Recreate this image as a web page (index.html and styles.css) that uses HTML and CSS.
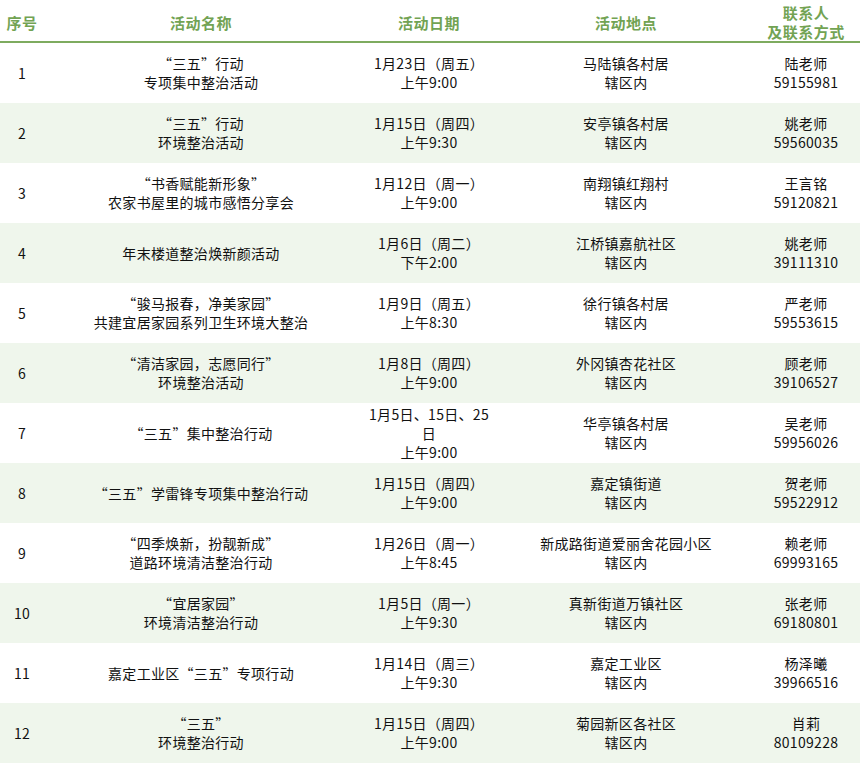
FILE: index.html
```html
<!DOCTYPE html>
<html lang="zh-CN">
<head>
<meta charset="utf-8">
<title>活动列表</title>
<link rel="stylesheet" href="styles.css">
</head>
<body>
<table class="events">
  <colgroup>
    <col class="c-no"><col class="c-name"><col class="c-date"><col class="c-place"><col class="c-contact">
  </colgroup>
  <thead>
    <tr>
      <th>序号</th>
      <th>活动名称</th>
      <th>活动日期</th>
      <th>活动地点</th>
      <th>联系人<br>及联系方式</th>
    </tr>
  </thead>
  <tbody>
    <tr><td>1</td><td>“三五”行动<br>专项集中整治活动</td><td>1月23日（周五）<br>上午9:00</td><td>马陆镇各村居<br>辖区内</td><td>陆老师<br>59155981</td></tr>
    <tr><td>2</td><td>“三五”行动<br>环境整治活动</td><td>1月15日（周四）<br>上午9:30</td><td>安亭镇各村居<br>辖区内</td><td>姚老师<br>59560035</td></tr>
    <tr><td>3</td><td>“书香赋能新形象”<br>农家书屋里的城市感悟分享会</td><td>1月12日（周一）<br>上午9:00</td><td>南翔镇红翔村<br>辖区内</td><td>王言铭<br>59120821</td></tr>
    <tr><td>4</td><td>年末楼道整治焕新颜活动</td><td>1月6日（周二）<br>下午2:00</td><td>江桥镇嘉航社区<br>辖区内</td><td>姚老师<br>39111310</td></tr>
    <tr><td>5</td><td>“骏马报春，净美家园”<br>共建宜居家园系列卫生环境大整治</td><td>1月9日（周五）<br>上午8:30</td><td>徐行镇各村居<br>辖区内</td><td>严老师<br>59553615</td></tr>
    <tr><td>6</td><td>“清洁家园，志愿同行”<br>环境整治活动</td><td>1月8日（周四）<br>上午9:00</td><td>外冈镇杏花社区<br>辖区内</td><td>顾老师<br>39106527</td></tr>
    <tr><td>7</td><td>“三五”集中整治行动</td><td>1月5日、15日、25<br>日<br>上午9:00</td><td>华亭镇各村居<br>辖区内</td><td>吴老师<br>59956026</td></tr>
    <tr><td>8</td><td>“三五”学雷锋专项集中整治行动</td><td>1月15日（周四）<br>上午9:00</td><td>嘉定镇街道<br>辖区内</td><td>贺老师<br>59522912</td></tr>
    <tr><td>9</td><td>“四季焕新，扮靓新成”<br>道路环境清洁整治行动</td><td>1月26日（周一）<br>上午8:45</td><td>新成路街道爱丽舍花园小区<br>辖区内</td><td>赖老师<br>69993165</td></tr>
    <tr><td>10</td><td>“宜居家园”<br>环境清洁整治行动</td><td>1月5日（周一）<br>上午9:30</td><td>真新街道万镇社区<br>辖区内</td><td>张老师<br>69180801</td></tr>
    <tr><td>11</td><td>嘉定工业区“三五”专项行动</td><td>1月14日（周三）<br>上午9:30</td><td>嘉定工业区<br>辖区内</td><td>杨泽曦<br>39966516</td></tr>
    <tr><td>12</td><td>“三五”<br>环境整治行动</td><td>1月15日（周四）<br>上午9:00</td><td>菊园新区各社区<br>辖区内</td><td>肖莉<br>80109228</td></tr>
  </tbody>
</table>
</body>
</html>
```
FILE: styles.css
```css
html, body {
  margin: 0;
  padding: 0;
  background: #ffffff;
}

.events {
  width: 860px;
  border-collapse: collapse;
  table-layout: fixed;
  font-family: "Noto Sans CJK SC", "Noto Sans", sans-serif;
  font-size: 14px;
  letter-spacing: 0.3px;
  color: #111111;
}

.c-no { width: 44px; }
.c-name { width: 314px; }
.c-date { width: 142px; }
.c-place { width: 252px; }
.c-contact { width: 108px; }

.events th {
  height: 38px;
  padding: 3px 0 0;
  border-bottom: 2px solid #7eab5f;
  color: #72a353;
  font-size: 15px;
  font-weight: bold;
  line-height: 19px;
  letter-spacing: 0.5px;
  text-align: center;
  vertical-align: middle;
}

.events td {
  height: 60px;
  padding: 0;
  line-height: 19px;
  text-align: center;
  vertical-align: middle;
}

.events tbody tr:nth-child(even) td {
  background: #eff6ec;
}
```
